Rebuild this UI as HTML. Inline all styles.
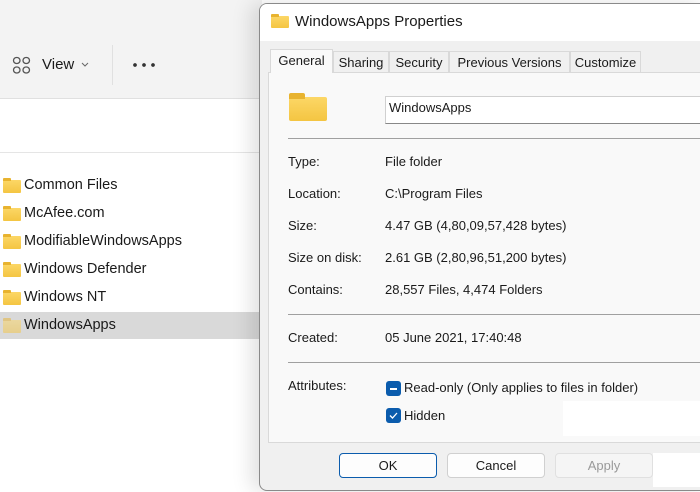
<!DOCTYPE html>
<html><head><meta charset="utf-8"><style>
*{margin:0;padding:0;box-sizing:border-box}
body{width:700px;height:492px;overflow:hidden;position:relative;background:#fff;font-family:"Liberation Sans",sans-serif;color:#1a1a1a}
.abs{position:absolute}
.f{position:absolute;width:18px;height:13px;background:linear-gradient(#fcd766,#f4c542);border-radius:1px}
.f:before{content:"";position:absolute;left:0;top:-2px;width:8px;height:3px;background:#e8b32f;border-radius:1px 1px 0 0}
.row{position:absolute;left:0;width:262px;height:28px;font-size:14.5px;line-height:28px}
.row span{position:absolute;left:24px}
.lbl{position:absolute;left:288px;font-size:13px}
.val{position:absolute;left:385px;font-size:13px}
.sep{position:absolute;left:288px;right:0;height:1px;background:#a0a0a0}
.tab{position:absolute;top:51px;height:21px;font-size:13px;line-height:21px;text-align:center;background:#f0f0f0;border:1px solid #d9d9d9;border-bottom:none}
.btn{position:absolute;top:453px;height:25px;font-size:13px;line-height:23px;text-align:center;border:1px solid #d0d0d0;border-radius:4px;background:#fdfdfd}
.cb{position:absolute;left:386px;width:15px;height:15px;background:#0b5cad;border-radius:3px}
</style></head><body>
<div class="abs" style="left:0;top:0;width:262px;height:98px;background:#f3f3f3"></div>
<div class="abs" style="left:0;top:98px;width:262px;height:1px;background:#e0e0e0"></div>
<div class="abs" style="left:0;top:152px;width:262px;height:1px;background:#e5e5e5"></div>
<div class="abs" style="left:112px;top:45px;width:1px;height:40px;background:#e0e0e0"></div>
<svg class="abs" style="left:12px;top:56px" width="20" height="20" viewBox="0 0 20 20" fill="none" stroke="#555" stroke-width="1.3"><rect x="1.5" y="1.5" width="6.5" height="6" rx="3"/><rect x="11" y="1.5" width="6.5" height="6" rx="3"/><rect x="1.5" y="11" width="6.5" height="6" rx="3"/><rect x="11" y="11" width="6.5" height="6" rx="3"/></svg>
<div class="abs" style="left:42px;top:56px;font-size:15px">View</div>
<svg class="abs" style="left:81px;top:62px" width="8" height="5"><path d="M1 1l3 3 3-3" stroke="#666" fill="none"/></svg>
<div class="abs" style="left:133px;top:63px;width:22px;height:4px;background:radial-gradient(circle at 2px 2px,#333 1.7px,transparent 2px) 0 0/9px 4px repeat-x"></div>
<div class="abs" style="left:0;top:312px;width:262px;height:27px;background:#d9d9d9"></div>
<div class="row" style="top:171px"><div class="f" style="left:3px;top:9px"></div><span>Common Files</span></div>
<div class="row" style="top:199px"><div class="f" style="left:3px;top:9px"></div><span>McAfee.com</span></div>
<div class="row" style="top:227px"><div class="f" style="left:3px;top:9px"></div><span>ModifiableWindowsApps</span></div>
<div class="row" style="top:255px"><div class="f" style="left:3px;top:9px"></div><span>Windows Defender</span></div>
<div class="row" style="top:283px"><div class="f" style="left:3px;top:9px"></div><span>Windows NT</span></div>
<div class="row" style="top:311px"><div class="f" style="left:3px;top:9px;opacity:.5"></div><span>WindowsApps</span></div>

<div class="abs" style="left:259px;top:3px;width:450px;height:488px;border:1px solid #8a8a8a;border-radius:8px;background:#f0f0f0;box-shadow:-8px 0 20px rgba(0,0,0,.12);overflow:hidden">
 <div class="abs" style="left:0;top:0;right:0;height:37px;background:#fff"></div>
</div>
<div class="f" style="left:271px;top:16px;height:12px"></div>
<div class="abs" style="left:295px;top:13px;font-size:15px">WindowsApps Properties</div>
<div class="abs" style="left:268px;top:72px;width:432px;height:371px;background:#f9f9f9;border:1px solid #d9d9d9;border-right:none"></div>
<div class="tab" style="left:270px;top:49px;width:63px;height:24px;background:#f9f9f9;line-height:22px">General</div>
<div class="tab" style="left:333px;width:56px">Sharing</div>
<div class="tab" style="left:389px;width:60px">Security</div>
<div class="tab" style="left:449px;width:121px">Previous Versions</div>
<div class="tab" style="left:570px;width:71px">Customize</div>
<div class="f" style="left:289px;top:97px;width:38px;height:24px;border-radius:2px"></div>
<div class="abs" style="left:289px;top:93px;width:16px;height:6px;background:#e8b32f;border-radius:2px 2px 0 0"></div>
<div class="abs" style="left:385px;top:96px;width:320px;height:28px;background:#fff;border:1px solid #d0d0d0;border-bottom-color:#888;font-size:13px;line-height:22px;padding-left:3px">WindowsApps</div>
<div class="sep" style="top:138px"></div>
<div class="lbl" style="top:154px">Type:</div><div class="val" style="top:154px">File folder</div>
<div class="lbl" style="top:186px">Location:</div><div class="val" style="top:186px">C:\Program Files</div>
<div class="lbl" style="top:218px">Size:</div><div class="val" style="top:218px">4.47 GB (4,80,09,57,428 bytes)</div>
<div class="lbl" style="top:250px">Size on disk:</div><div class="val" style="top:250px">2.61 GB (2,80,96,51,200 bytes)</div>
<div class="lbl" style="top:282px">Contains:</div><div class="val" style="top:282px">28,557 Files, 4,474 Folders</div>
<div class="sep" style="top:314px"></div>
<div class="lbl" style="top:330px">Created:</div><div class="val" style="top:330px">05 June 2021, 17:40:48</div>
<div class="sep" style="top:362px"></div>
<div class="lbl" style="top:378px">Attributes:</div>
<div class="cb" style="top:381px"><div class="abs" style="left:4px;top:7px;width:7px;height:1.5px;background:#fff"></div></div>
<div class="val" style="left:404px;top:380px">Read-only (Only applies to files in folder)</div>
<div class="cb" style="top:408px"><svg class="abs" style="left:2px;top:3px" width="11" height="9"><path d="M2 4.5l2.5 2.5 4.5-5" stroke="#fff" stroke-width="1.3" fill="none"/></svg></div>
<div class="val" style="left:404px;top:408px">Hidden</div>
<div class="abs" style="left:563px;top:401px;width:137px;height:35px;background:#fff"></div>
<div class="btn" style="left:339px;width:98px;border-color:#0b5cad;background:#fdfdfd">OK</div>
<div class="btn" style="left:447px;width:98px">Cancel</div>
<div class="btn" style="left:555px;width:98px;color:#9a9a9a;background:#f5f5f5;border-color:#e0e0e0">Apply</div>
<div class="abs" style="left:653px;top:453px;width:47px;height:34px;background:#fff"></div>
</body></html>
